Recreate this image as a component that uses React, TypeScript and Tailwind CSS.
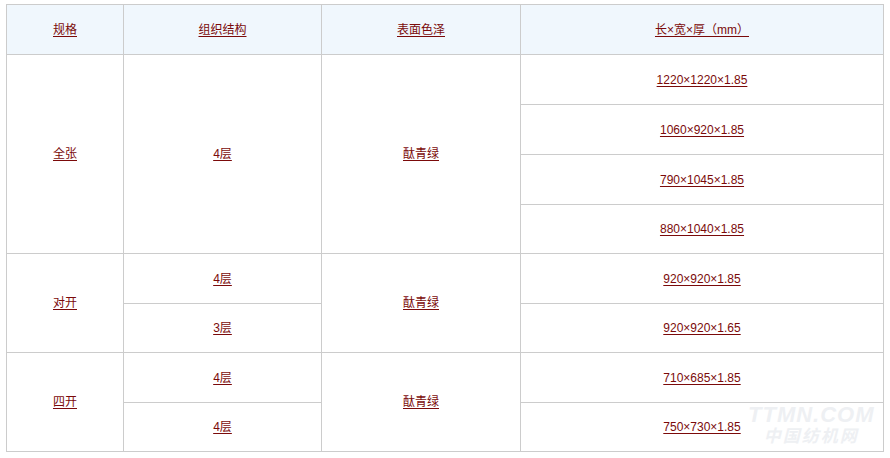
const rows = [
  { spec: '全张', layers: ['4层'], color: '酞青绿', sizes: ['1220×1220×1.85', '1060×920×1.85', '790×1045×1.85', '880×1040×1.85'] },
  { spec: '对开', layers: ['4层', '3层'], color: '酞青绿', sizes: ['920×920×1.85', '920×920×1.65'] },
  { spec: '四开', layers: ['4层', '4层'], color: '酞青绿', sizes: ['710×685×1.85', '750×730×1.85'] },
];

const heights = ['h-[50px]', 'h-[50px]', 'h-[50px]', 'h-[49px]', 'h-[50px]', 'h-[49px]', 'h-[50px]', 'h-[49px]'];

const cell = 'border border-[#cccccc] text-center align-middle p-0';
const link = 'text-[#7b0a0a] underline underline-offset-2 decoration-1';

export default function App() {
  let rowIndex = 0;
  return (
    <div
      className="relative w-[890px] h-[458px] bg-white pt-[4px] pl-[6px] text-[12px]"
      style={{ fontFamily: '"Liberation Sans", "Noto Sans CJK SC", sans-serif' }}
    >
      <table className="border-collapse table-fixed w-[877px]">
        <colgroup>
          <col className="w-[117px]" />
          <col className="w-[198px]" />
          <col className="w-[199px]" />
          <col className="w-[363px]" />
        </colgroup>
        <thead>
          <tr className="h-[50px] bg-[#f0f7fd]">
            {['规格', '组织结构', '表面色泽', '长×宽×厚（mm）'].map((h) => (
              <th key={h} className={`${cell} font-normal`}>
                <span className={link}>{h}</span>
              </th>
            ))}
          </tr>
        </thead>
        <tbody>
          {rows.map((group) =>
            group.sizes.map((size, i) => {
              const h = heights[rowIndex++];
              const layerSpan = group.sizes.length / group.layers.length;
              return (
                <tr key={size + i} className={h}>
                  {i === 0 && (
                    <td rowSpan={group.sizes.length} className={cell}>
                      <span className={link}>{group.spec}</span>
                    </td>
                  )}
                  {i % layerSpan === 0 && (
                    <td rowSpan={layerSpan} className={cell}>
                      <span className={link}>{group.layers[i / layerSpan]}</span>
                    </td>
                  )}
                  {i === 0 && (
                    <td rowSpan={group.sizes.length} className={cell}>
                      <span className={link}>{group.color}</span>
                    </td>
                  )}
                  <td className={cell}>
                    <span className={link}>{size}</span>
                  </td>
                </tr>
              );
            })
          )}
        </tbody>
      </table>

      {/* watermark */}
      <div className="absolute left-[748px] top-[404px] flex flex-col items-center leading-none italic font-bold text-[#eef0f3] pointer-events-none">
        <span className="text-[22px] tracking-[1px]">TTMN.COM</span>
        <span className="text-[17px] tracking-[2px] mt-[2px]">中国纺机网</span>
      </div>
    </div>
  );
}
